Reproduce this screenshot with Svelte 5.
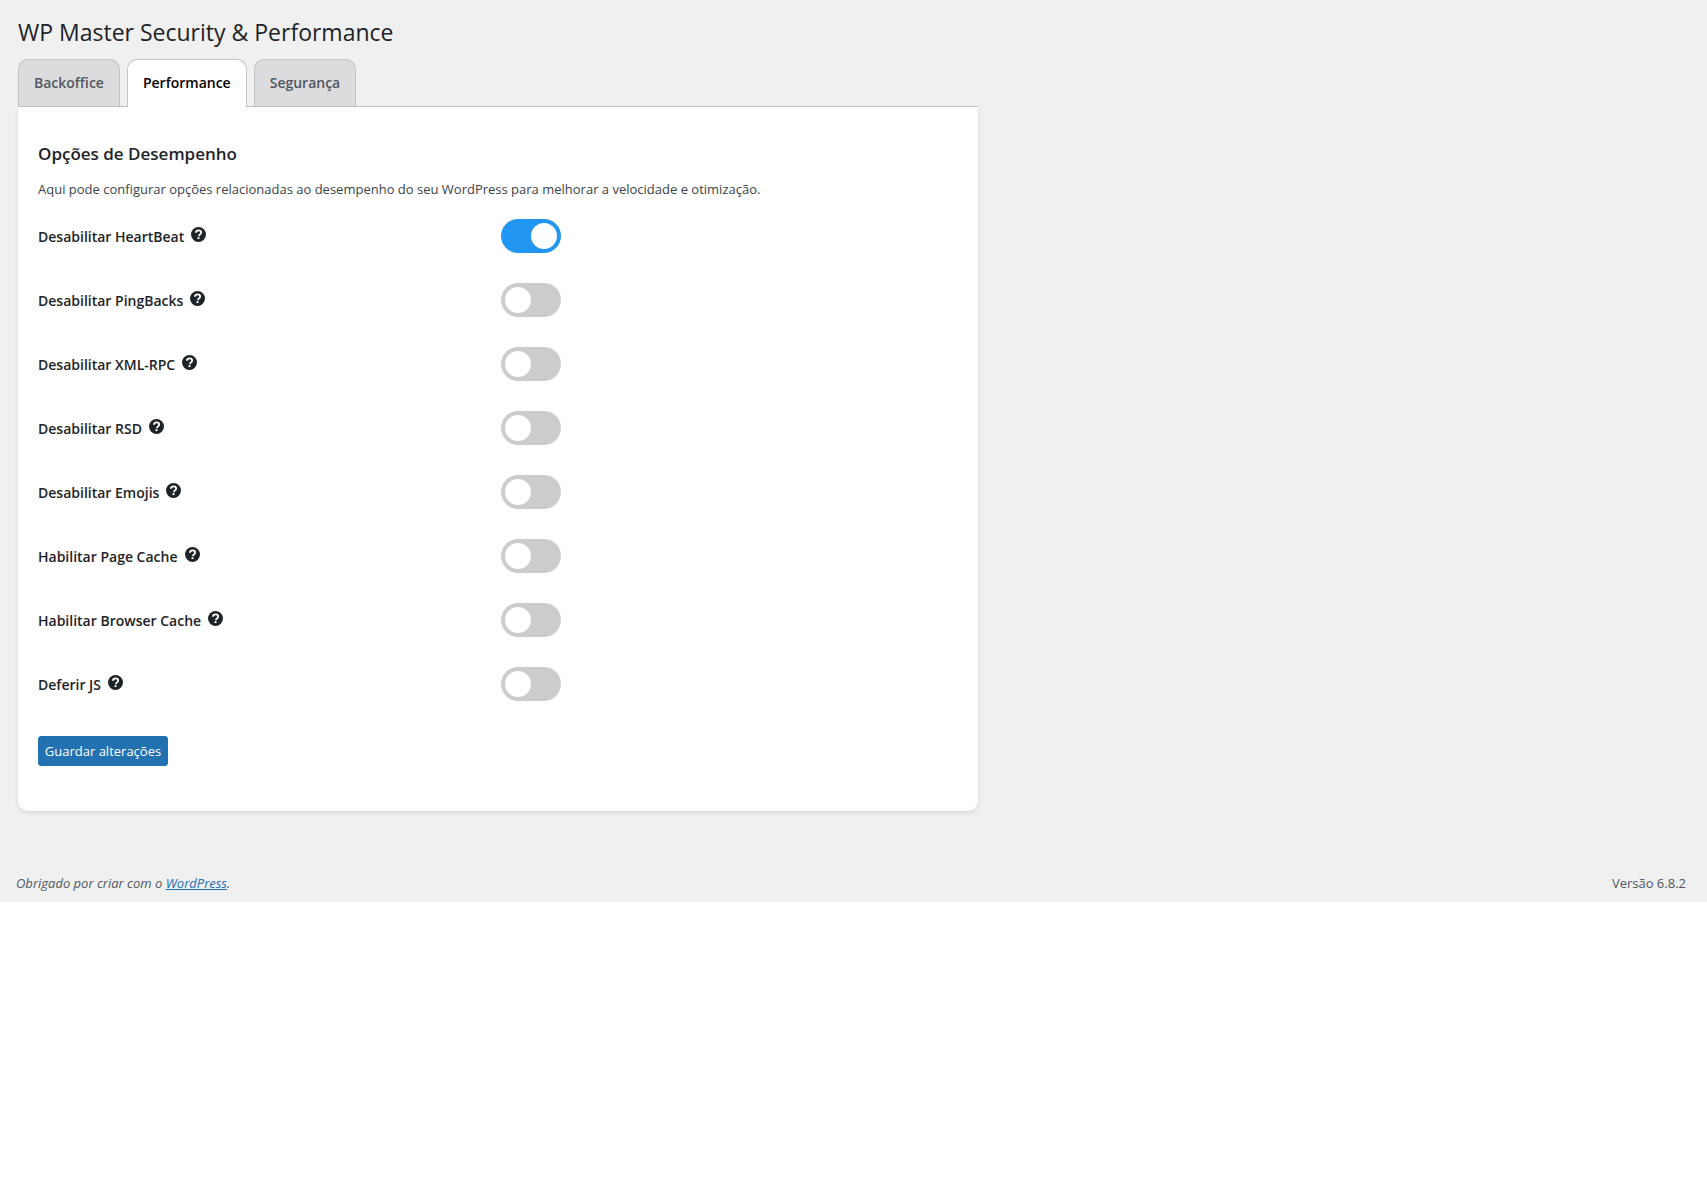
<script>
	const tabs = [
		{ label: 'Backoffice', active: false },
		{ label: 'Performance', active: true },
		{ label: 'Segurança', active: false }
	];
	const options = [
		{ label: 'Desabilitar HeartBeat', on: true },
		{ label: 'Desabilitar PingBacks', on: false },
		{ label: 'Desabilitar XML-RPC', on: false },
		{ label: 'Desabilitar RSD', on: false },
		{ label: 'Desabilitar Emojis', on: false },
		{ label: 'Habilitar Page Cache', on: false },
		{ label: 'Habilitar Browser Cache', on: false },
		{ label: 'Deferir JS', on: false }
	];
</script>

<div class="page">
	<main>
		<h1>WP Master Security &amp; Performance</h1>
		<nav class="tabs">
			{#each tabs as tab}
				<a href="#top" class="tab" class:active={tab.active}>{tab.label}</a>
			{/each}
		</nav>
		<section class="card">
			<h2>Opções de Desempenho</h2>
			<p>Aqui pode configurar opções relacionadas ao desempenho do seu WordPress para melhorar a velocidade e otimização.</p>
			<div class="rows">
				{#each options as opt}
					<div class="row">
						<div class="label">
							<span>{opt.label}</span>
							<svg class="help" viewBox="0 0 14 14" width="15" height="15" aria-hidden="true">
								<circle cx="7" cy="7" r="7" fill="#1d2327" />
								<path d="M4.6 5.4C4.7 4 5.7 3.2 7.1 3.2c1.4 0 2.4.8 2.4 2 0 1-.6 1.5-1.2 1.9-.6.4-.8.7-.8 1.3v.2" fill="none" stroke="#fff" stroke-width="1.7" />
								<rect x="6.1" y="9.5" width="1.8" height="1.8" fill="#fff" />
							</svg>
						</div>
						<div class="switch" class:on={opt.on}><div class="knob"></div></div>
					</div>
				{/each}
			</div>
			<button type="button">Guardar alterações</button>
		</section>
	</main>
	<footer>
		<em>Obrigado por criar com o <a href="#top">WordPress</a>.</em>
		<span>Versão 6.8.2</span>
	</footer>
</div>

<style>
	:global(body) {
		background: #fff;
		font-family: "Open Sans", "Noto Sans", sans-serif;
		font-stretch: 90%;
		font-size: 13px;
		color: #3c434a;
	}
	.page {
		background: #f0f0f1;
		height: 902px;
		display: flex;
		flex-direction: column;
		justify-content: space-between;
	}
	main {
		width: 960px;
		margin-left: 18px;
	}
	h1 {
		margin: 0;
		padding: 17px 0 0;
		font-size: 23px;
		line-height: 30px;
		font-weight: 400;
		color: #1d2327;
	}
	.tabs {
		display: flex;
		gap: 7px;
		margin-top: 12px;
		height: 47px;
		border-bottom: 1px solid #c3c4c7;
	}
	.tab {
		height: 47px;
		box-sizing: border-box;
		padding: 13px 15px 0;
		border: 1px solid #c3c4c7;
		border-bottom: none;
		border-radius: 10px 10px 0 0;
		background: #dcdcde;
		color: #50575e;
		font-size: 14px;
		line-height: 20px;
		font-weight: 600;
		text-decoration: none;
	}
	.tab.active {
		background: #fff;
		color: #000;
		height: 48px;
	}
	.card {
		height: 704px;
		box-sizing: border-box;
		padding: 35px 20px 0;
		background: #fff;
		border-radius: 0 0 10px 10px;
		box-shadow: 0 2px 5px rgba(0, 0, 0, 0.1);
	}
	h2 {
		margin: 0;
		font-size: 17px;
		line-height: 24px;
		font-weight: 600;
		color: #1d2327;
	}
	p {
		margin: 13px 0 0;
		line-height: 20px;
	}
	.rows {
		margin-top: 20px;
	}
	.row {
		display: flex;
		align-items: center;
		height: 34px;
		padding-bottom: 30px;
	}
	.label {
		width: 463px;
		display: flex;
		align-items: center;
		gap: 7px;
		font-size: 14px;
		font-weight: 600;
		color: #1d2327;
	}
	.help {
		margin-top: -3px;
	}
	.switch {
		width: 60px;
		height: 34px;
		border-radius: 17px;
		background: #ccc;
		position: relative;
	}
	.switch.on {
		background: #2196f3;
	}
	.knob {
		position: absolute;
		left: 4px;
		top: 4px;
		width: 26px;
		height: 26px;
		border-radius: 50%;
		background: #fff;
	}
	.switch.on .knob {
		left: 30px;
	}
	button {
		display: block;
		margin-top: 5px;
		width: 130px;
		height: 30px;
		padding: 0;
		border: 1px solid #2271b1;
		border-radius: 3px;
		background: #2271b1;
		color: #fff;
		font: inherit;
		font-size: 13px;
	}
	footer {
		display: flex;
		justify-content: space-between;
		padding: 0 21px 9px 16px;
		line-height: 20px;
		color: #50575e;
	}
	footer a {
		color: #2271b1;
	}
</style>
